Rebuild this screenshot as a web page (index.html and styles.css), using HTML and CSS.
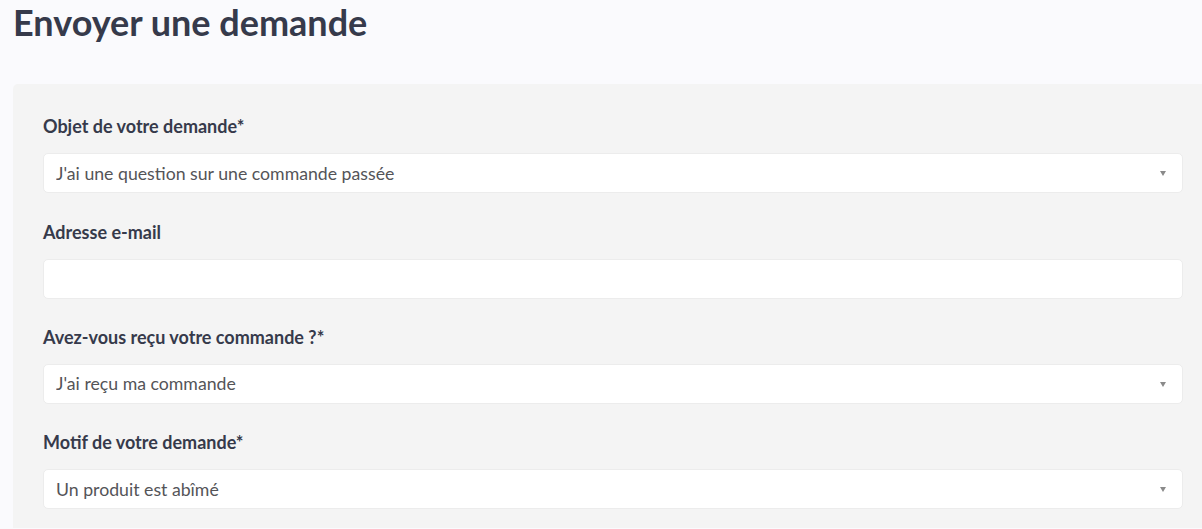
FILE: index.html
```html
<!DOCTYPE html>
<html lang="fr">
<head>
    <meta charset="UTF-8">
    <meta name="viewport" content="width=device-width, initial-scale=1.0">
    <title>Envoyer une demande</title>
    <link rel="stylesheet" href="styles.css">
</head>
<body>
    <h1 class="page-title">Envoyer une demande</h1>

    <!-- Formulaire de demande -->
    <form class="request-form">
        <div class="field">
            <label for="objet">Objet de votre demande*</label>
            <div class="select-wrap">
                <select id="objet" name="objet">
                    <option>J'ai une question sur une commande passée</option>
                </select>
                <span class="caret"></span>
            </div>
        </div>

        <div class="field">
            <label for="email">Adresse e-mail</label>
            <input type="email" id="email" name="email">
        </div>

        <div class="field">
            <label for="recu">Avez-vous reçu votre commande ?*</label>
            <div class="select-wrap">
                <select id="recu" name="recu">
                    <option>J'ai reçu ma commande</option>
                </select>
                <span class="caret"></span>
            </div>
        </div>

        <div class="field">
            <label for="motif">Motif de votre demande*</label>
            <div class="select-wrap">
                <select id="motif" name="motif">
                    <option>Un produit est abîmé</option>
                </select>
                <span class="caret"></span>
            </div>
        </div>
    </form>
</body>
</html>
```

FILE: styles.css
```css
body {
    font-family: Lato, "Open Sans", Arial, sans-serif;
    background-color: #fafafd;
    margin: 0;
    padding: 0 0 0 13px;
    overflow: hidden;
    color: #363a4b;
}

.page-title {
    font-size: 36px;
    font-weight: 700;
    line-height: 1.2;
    margin: 0 0 40px 0;
    padding-top: 1px;
}

/* Formulaire */
.request-form {
    width: 1140px;
    background-color: #f4f4f4;
    border-radius: 5px 0 0 0;
    padding: 31px 30px 19px 30px;
}

.field {
    margin-bottom: 27.4px;
}

.field:last-child {
    margin-bottom: 0;
}

.field label {
    display: block;
    font-size: 18px;
    font-weight: 700;
    line-height: 22px;
    margin-bottom: 16px;
}

.field input,
.field select {
    display: block;
    width: 100%;
    height: 40px;
    box-sizing: border-box;
    background-color: #fff;
    border: 1px solid #ececec;
    border-radius: 5px;
    padding: 0 12px;
    font-family: inherit;
    font-size: 17.7px;
    color: #545458;
    outline: none;
}

.field select {
    -webkit-appearance: none;
    appearance: none;
}

.select-wrap {
    position: relative;
}

.caret {
    position: absolute;
    right: 17px;
    top: 18px;
    width: 0;
    height: 0;
    border-left: 3px solid transparent;
    border-right: 3px solid transparent;
    border-top: 5px solid #8a8a8a;
}
```
